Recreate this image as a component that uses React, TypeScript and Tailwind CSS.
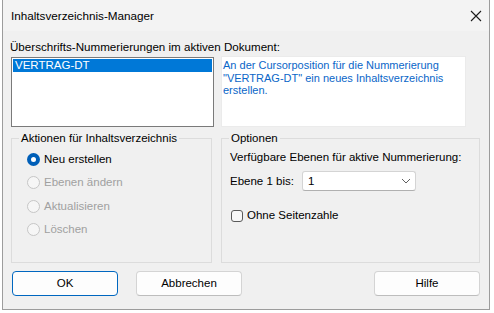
import React from "react";

function Radio({ label, checked, disabled }: { label: string; checked?: boolean; disabled?: boolean }) {
  return (
    <div className="flex h-[23.3px] items-center">
      {checked ? (
        <span className="flex h-[13px] w-[13px] items-center justify-center rounded-full bg-[#005fb8]">
          <span className="h-[5px] w-[5px] rounded-full bg-white" />
        </span>
      ) : (
        <span className="h-[13px] w-[13px] rounded-full border border-[#c6c6c6] bg-[#f6f6f6]" />
      )}
      <span className={"ml-[4px] " + (disabled ? "text-[#a0a0a0]" : "text-black")}>{label}</span>
    </div>
  );
}

function Button({ label, primary }: { label: string; primary?: boolean }) {
  return (
    <button
      className={
        "flex h-[25px] w-[106px] items-center justify-center rounded-[4px] border bg-[#fdfdfd] text-black " +
        (primary ? "border-[#0067c0]" : "border-[#d4d4d4] border-b-[#bdbdbd]")
      }
    >
      {label}
    </button>
  );
}

export default function App() {
  return (
    <div className="h-[313px] w-[494px] bg-white font-['Liberation_Sans',Arial,sans-serif] text-[11.5px] leading-[15px] text-black">
      <div className="ml-[2px] flex h-[310px] w-[488px] flex-col border-x border-b border-[#9c9c9c] bg-[#f0f0f0]">
        {/* title bar */}
        <div className="flex h-[31px] items-center justify-between bg-[#f3f3f3] pl-[8px] pr-[7px]">
          <span className="text-[11.7px]">Inhaltsverzeichnis-Manager</span>
          <svg width="12" height="12" viewBox="0 0 12 12" className="text-[#1a1a1a]">
            <path d="M1 1 L11 11 M11 1 L1 11" stroke="currentColor" strokeWidth="1.1" fill="none" />
          </svg>
        </div>

        <div className="flex flex-col px-[8px]">
          <div className="-ml-px mt-[8px] text-[11.6px]">Überschrifts-Nummerierungen im aktiven Dokument:</div>

          <div className="mt-[2px] flex items-start gap-[7px]">
            <div className="mt-px h-[70px] w-[203px] border border-[#7a7a7a] bg-white p-px">
              <div className="h-[13px] bg-[#0078d7] pl-[2px] leading-[13px] text-white">VERTRAG-DT</div>
            </div>
            <div className="h-[71px] w-[245px] border border-[#ebebeb] bg-white pl-[1px] pt-[2px] text-[11px] leading-[12.7px] text-[#0a66c8]">
              An der Cursorposition für die Nummerierung
              <br />
              "VERTRAG-DT" ein neues Inhaltsverzeichnis
              <br />
              erstellen.
            </div>
          </div>

          <div className="mt-[4px] flex gap-[9px]">
            <fieldset className="h-[132px] w-[201px] border border-[#dcdcdc]">
              <legend className="ml-[7px] px-[2px]">Aktionen für Inhaltsverzeichnis</legend>
              <div className="flex flex-col pl-[15px] pt-[2px]">
                <Radio label="Neu erstellen" checked />
                <Radio label="Ebenen ändern" disabled />
                <Radio label="Aktualisieren" disabled />
                <Radio label="Löschen" disabled />
              </div>
            </fieldset>

            <fieldset className="h-[132px] w-[259px] border border-[#dcdcdc]">
              <legend className="ml-[7px] px-[2px]">Optionen</legend>
              <div className="flex flex-col pl-[8px]">
                <div className="mt-[4px]">Verfügbare Ebenen für aktive Nummerierung:</div>
                <div className="mt-[6px] flex items-center">
                  <span className="w-[72px]">Ebene 1 bis:</span>
                  <div className="flex h-[20px] w-[114px] items-center justify-between rounded-[3px] border border-[#d4d4d4] border-b-[#b0b0b0] bg-white pl-[5px] pr-[4px]">
                    <span>1</span>
                    <svg width="10" height="6" viewBox="0 0 10 6">
                      <path d="M1 1 L5 5 L9 1" stroke="#606060" strokeWidth="1" fill="none" />
                    </svg>
                  </div>
                </div>
                <div className="mt-[17px] flex items-center">
                  <span className="ml-px h-[12px] w-[12px] rounded-[3px] border border-[#5a5a5a] bg-[#f7f7f7]" />
                  <span className="ml-[4px]">Ohne Seitenzahle</span>
                </div>
              </div>
            </fieldset>
          </div>

          <div className="mt-[8px] flex items-center justify-between pl-px pr-[1px]">
            <div className="flex gap-[18px]">
              <Button label="OK" primary />
              <Button label="Abbrechen" />
            </div>
            <Button label="Hilfe" />
          </div>
        </div>
      </div>
    </div>
  );
}
